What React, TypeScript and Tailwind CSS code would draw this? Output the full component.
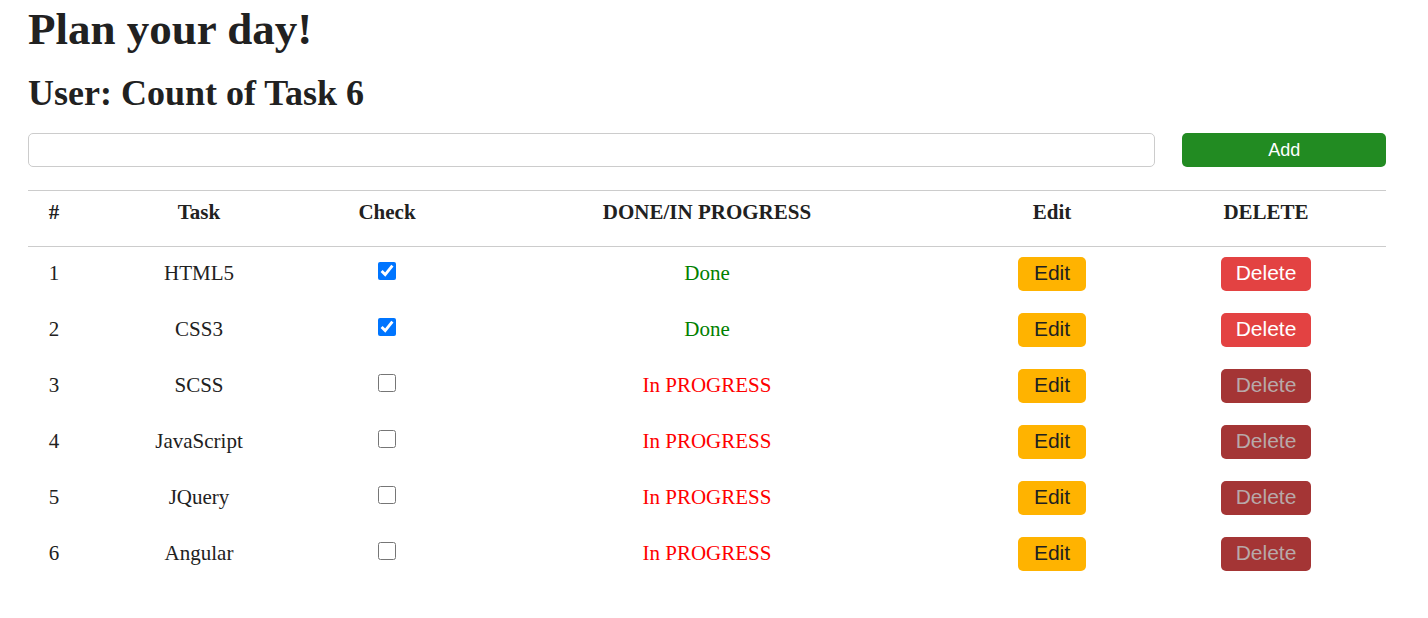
import { useState } from "react";

type Task = { id: number; name: string; done: boolean };

const initialTasks: Task[] = [
  { id: 1, name: "HTML5", done: true },
  { id: 2, name: "CSS3", done: true },
  { id: 3, name: "SCSS", done: false },
  { id: 4, name: "JavaScript", done: false },
  { id: 5, name: "JQuery", done: false },
  { id: 6, name: "Angular", done: false },
];

const headings = ["#", "Task", "Check", "DONE/IN PROGRESS", "Edit", "DELETE"];

type RowProps = { task: Task; onToggle: () => void; onEdit: () => void; onDelete: () => void };

function TaskRow({ task, onToggle, onEdit, onDelete }: RowProps) {
  return (
    <tr className="h-14 align-top">
      <td className="pt-2.5">{task.id}</td>
      <td className="pt-2.5">{task.name}</td>
      <td className="pt-[15px]">
        <input
          type="checkbox"
          aria-label={`${task.name} done`}
          checked={task.done}
          onChange={onToggle}
          className="mx-auto block size-[18px] accent-[#0075ff]"
        />
      </td>
      <td className={task.done ? "pt-2.5 text-[#008000]" : "pt-2.5 text-[#ff0000]"}>
        {task.done ? "Done" : "In PROGRESS"}
      </td>
      <td className="pt-2.5">
        <button
          type="button"
          onClick={onEdit}
          className="mx-auto block h-[34px] w-[68px] rounded-[5px] bg-[#ffb300] pb-0.5 font-['Liberation_Sans',sans-serif]"
        >
          Edit
        </button>
      </td>
      <td className="pt-2.5">
        <button
          type="button"
          disabled={!task.done}
          onClick={onDelete}
          className="mx-auto block h-[34px] w-[90px] rounded-[5px] bg-[#e34242] pb-0.5 font-['Liberation_Sans',sans-serif] text-white disabled:bg-[#a43535] disabled:text-[#b8a9a9]"
        >
          Delete
        </button>
      </td>
    </tr>
  );
}

export default function App() {
  const [tasks, setTasks] = useState(initialTasks);
  const [text, setText] = useState("");
  const [editing, setEditing] = useState<number | null>(null);

  const save = () => {
    const name = text.trim();
    if (!name) return;
    setTasks((list) =>
      editing !== null
        ? list.map((t) => (t.id === editing ? { ...t, name } : t))
        : [...list, { id: Math.max(0, ...list.map((t) => t.id)) + 1, name, done: false }],
    );
    setEditing(null);
    setText("");
  };

  return (
    <main className="bg-white pr-[42px] pb-10 pl-7 font-['Liberation_Serif',serif] text-[#212121]">
      <h1 className="pt-1 text-[45px] leading-[50px] font-bold">Plan your day!</h1>
      <h2 className="mt-[18px] text-[36px] leading-[42px] font-bold">User: Count of Task {tasks.length}</h2>

      <form
        className="mt-[19px] flex gap-[27px] font-['Liberation_Sans',sans-serif] text-lg"
        onSubmit={(e) => {
          e.preventDefault();
          save();
        }}
      >
        <input
          type="text"
          aria-label="Task name"
          value={text}
          onChange={(e) => setText(e.target.value)}
          className="h-[34px] min-w-0 flex-1 rounded-[5px] border border-[#cccccc] px-3"
        />
        <button type="submit" className="h-[34px] w-[15%] rounded-[5px] bg-[#228b22] text-white">
          Add
        </button>
      </form>

      <table className="mt-[23px] w-full table-fixed border-collapse text-center text-[21px] leading-8">
        <colgroup>
          <col className="w-[52px]" />
          <col className="w-[238px]" />
          <col className="w-[138px]" />
          <col className="w-[502px]" />
          <col className="w-[188px]" />
          <col className="w-[240px]" />
        </colgroup>
        <thead>
          <tr className="h-14 border-y border-[#cccccc] align-top">
            {headings.map((h) => (
              <th key={h} scope="col" className="pt-[5px] font-bold">
                {h}
              </th>
            ))}
          </tr>
        </thead>
        <tbody>
          {tasks.map((task) => (
            <TaskRow
              key={task.id}
              task={task}
              onToggle={() =>
                setTasks((list) => list.map((t) => (t.id === task.id ? { ...t, done: !t.done } : t)))
              }
              onEdit={() => {
                setEditing(task.id);
                setText(task.name);
              }}
              onDelete={() => setTasks((list) => list.filter((t) => t.id !== task.id))}
            />
          ))}
        </tbody>
      </table>
    </main>
  );
}
